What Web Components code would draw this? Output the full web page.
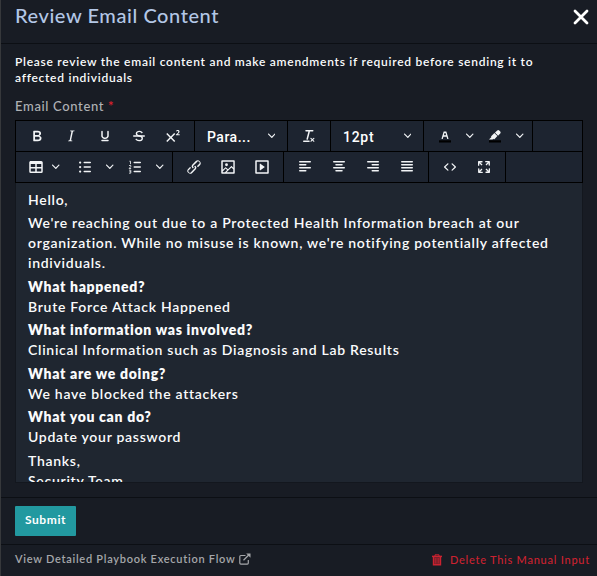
<!DOCTYPE html>
<html lang="en">
<head>
<meta charset="utf-8">
<title>Review Email Content</title>
<style>
html,body{margin:0;height:100%;background:#181c24;overflow:hidden}
body{font-family:Lato,"Liberation Sans",sans-serif;color:#fff}
</style>
</head>
<body>
<review-dialog>
  <dialog-header slot="header">Review Email Content</dialog-header>
  <form-hint>Please review the email content and make amendments if required before sending it to<br>affected individuals</form-hint>
  <field-label>Email Content</field-label>
  <rich-editor>
    <editor-toolbar slot="toolbar"></editor-toolbar>
    <mail-block style="--top:7px">Hello,</mail-block>
    <mail-block style="--top:3px">We're reaching out due to a Protected Health Information breach at our<br>organization. While no misuse is known, we're notifying potentially affected<br>individuals.</mail-block>
    <mail-block style="--top:4px"><span slot="title">What happened?</span>Brute Force Attack Happened</mail-block>
    <mail-block style="--top:3px"><span slot="title">What information was involved?</span>Clinical Information such as Diagnosis and Lab Results</mail-block>
    <mail-block style="--top:4px"><span slot="title">What are we doing?</span>We have blocked the attackers</mail-block>
    <mail-block style="--top:3px"><span slot="title">What you can do?</span>Update your password</mail-block>
    <mail-block style="--top:4px">Thanks,<br>Security Team</mail-block>
  </rich-editor>
  <submit-bar slot="actions">Submit</submit-bar>
  <dialog-footer slot="footer"><span slot="view">View Detailed Playbook Execution Flow</span><span slot="delete">Delete This Manual Input</span></dialog-footer>
</review-dialog>
<script>
const define = (name, html) => customElements.define(name, class extends HTMLElement {
  constructor() { super(); this.attachShadow({mode: 'open'}).innerHTML = html; }
});

const bars = rows => rows.map(([x, y, w]) => `<rect x="${x}" y="${y}" width="${w}" height="2" rx="1"/>`).join('');
const arrow = '<path d="m15.3 10-1.2-1.3 2.9-3h-2.3a.9.9 0 1 1 0-1.7H19c.5 0 .9.4.9.9v4.4a.9.9 0 1 1-1.8 0V7Z"/>';
const frame = 'M4 3h16c.6 0 1 .4 1 1v16c0 .6-.4 1-1 1H4a1 1 0 0 1-1-1V4c0-.6.4-1 1-1Z';
const icons = {
  bold: '<path fill-rule="evenodd" d="M7.8 19c-.3 0-.5 0-.6-.2l-.2-.5V5.7c0-.2 0-.4.2-.5l.6-.2h5c1.5 0 2.7.3 3.5 1 .7.6 1.1 1.4 1.1 2.5a3 3 0 0 1-.6 1.9c-.4.6-1 1-1.6 1.2.4.1.9.3 1.3.6s.8.7 1 1.2c.4.4.5 1 .5 1.6 0 1.3-.4 2.3-1.3 3-.8.7-2.1 1-3.8 1H7.8Zm5-8.3c.6 0 1.2-.1 1.6-.5.4-.3.6-.7.6-1.3 0-1.1-.8-1.7-2.3-1.7H9.3v3.5h3.4Zm.5 6c.7 0 1.3-.1 1.7-.4.4-.4.6-.9.6-1.5s-.2-1-.7-1.4c-.4-.3-1-.4-2-.4H9.4v3.8h4Z"/>',
  italic: '<path d="m16.7 4.7-.1.9h-.3c-.6 0-1 0-1.4.3-.3.3-.4.6-.5 1.1l-2.1 9.8v.6c0 .5.4.8 1.4.8h.2l-.2.8H8l.2-.8h.2c1.1 0 1.8-.5 2-1.5l2-9.8.1-.5c0-.6-.4-.8-1.4-.8h-.3l.2-.9h5.8Z"/>',
  underline: '<path d="M16 5c.6 0 1 .4 1 1v5.5a4 4 0 0 1-.4 1.8l-1 1.4a5.3 5.3 0 0 1-5.5 1 5 5 0 0 1-1.6-1c-.5-.4-.8-.9-1.1-1.4a4 4 0 0 1-.4-1.8V6c0-.6.4-1 1-1s1 .4 1 1v5.5c0 .3 0 .6.2 1l.6.7a3.3 3.3 0 0 0 2.2.8 3.4 3.4 0 0 0 2.2-.8c.3-.2.4-.5.6-.8l.2-.9V6c0-.6.4-1 1-1ZM8 17h8c.6 0 1 .4 1 1s-.4 1-1 1H8a1 1 0 0 1 0-2Z"/>',
  strike: '<path d="M15.6 8.5c-.5-.7-1-1.1-1.3-1.3-.6-.4-1.3-.6-2-.6-2.7 0-2.8 1.7-2.8 2.1 0 1.6 1.8 2 3.2 2.3 4.4.9 4.6 2.8 4.6 3.9 0 1.4-.7 4.1-5 4.1A6.2 6.2 0 0 1 7 16.4l1.5-1.1c.4.6 1.6 2 3.7 2 1.6 0 2.5-.4 3-1.2.4-.8.3-2-.8-2.6-.7-.4-1.6-.7-2.9-1-1-.2-3.9-.8-3.9-3.6C7.6 6 10.3 5 12.4 5c2.9 0 4.2 1.6 4.7 2.4l-1.5 1.1Z"/><path d="M5 11h14a1 1 0 0 1 0 2H5a1 1 0 0 1 0-2Z"/>',
  sup: '<path d="M15 9.4 10.4 14l4.6 4.6-1.4 1.4L9 15.4 4.4 20 3 18.6 7.6 14 3 9.4 4.4 8 9 12.6 13.6 8 15 9.4Zm5.9 1.6h-5v-1l1-.8 1.7-1.6c.3-.5.5-.9.5-1.3 0-.3 0-.5-.2-.7-.2-.2-.5-.3-.9-.3l-.8.2-.7.4-.4-1.2c.2-.2.5-.4 1-.5.3-.2.8-.2 1.2-.2.8 0 1.4.2 1.8.6.4.4.6 1 .6 1.6 0 .5-.2 1-.5 1.5l-1.3 1.4-.6.5h2.6V11Z"/>',
  clear: '<path d="M13.2 6a1 1 0 0 1 0 .2l-2.6 10a1 1 0 0 1-1 .8h-.2a.8.8 0 0 1-.8-1l2.6-10H8a1 1 0 1 1 0-2h9a1 1 0 0 1 0 2h-3.8ZM5 18h7a1 1 0 0 1 0 2H5a1 1 0 0 1 0-2Zm13 1.5L16.5 18 15 19.5a.7.7 0 0 1-1-1l1.5-1.5-1.5-1.5a.7.7 0 0 1 1-1l1.5 1.5 1.5-1.5a.7.7 0 0 1 1 1L17.5 17l1.5 1.5a.7.7 0 0 1-1 1Z"/>',
  color: '<path fill="#000" d="M4 18h16v3H4z" transform="translate(0 -.3)"/><path fill-rule="evenodd" d="M8.7 16h-.8a.5.5 0 0 1-.5-.6l2.7-9c.1-.3.3-.4.5-.4h2.8c.2 0 .4.1.5.4l2.7 9a.5.5 0 0 1-.5.6h-.8a.5.5 0 0 1-.4-.4l-.7-2.2c0-.3-.3-.4-.5-.4h-3.4c-.2 0-.4.1-.5.4l-.7 2.2c0 .3-.2.4-.4.4Zm2.6-7.6-.6 2a.5.5 0 0 0 .5.6h1.6a.5.5 0 0 0 .5-.6l-.6-2c0-.3-.3-.4-.5-.4h-.4c-.2 0-.4.1-.5.4Z"/>',
  mark: '<path fill="#000" d="M4 18h16v3H4z" transform="translate(0 -.3)"/><path d="M7.7 16.7H3l3.3-3.3-.7-.8L10.2 8l4 4.1-4 4.2c-.2.2-.6.2-.8 0l-.6-.7-1.1 1.1zm5-7.5L11 7.4l3-2.9a2 2 0 0 1 2.6 0L18 6c.7.7.7 2 0 2.7l-2.9 2.9-1.8-1.8-.5-.6Z" transform="translate(1 0)"/>',
  table: '<path fill-rule="evenodd" d="M19 4a2 2 0 0 1 2 2v12a2 2 0 0 1-2 2H5a2 2 0 0 1-2-2V6c0-1.1.9-2 2-2h14ZM5 14v4h6v-4H5Zm14 0h-6v4h6v-4Zm0-6h-6v4h6V8ZM5 12h6V8H5v4Z"/>',
  ul: bars([[10,5,10],[10,11,10],[10,17,10]]) + '<circle cx="5.5" cy="6" r="1.5"/><circle cx="5.5" cy="12" r="1.5"/><circle cx="5.5" cy="18" r="1.5"/>',
  ol: bars([[10,5,10],[10,11,10],[10,17,10]]) + '<path fill="none" stroke="currentColor" stroke-width="1.1" d="M4.5 4.3H6v4M4 10h2.3v1.5L4.2 14h2.6M4 16.2h2.4v4H4m.6-2h1.8"/>',
  link: '<path d="M6.2 12.3a1 1 0 0 1 1.4 1.4l-2 2a2 2 0 1 0 2.6 2.8l4.8-4.8a1 1 0 0 0 0-1.4 1 1 0 1 1 1.4-1.3 2.9 2.9 0 0 1 0 4L9.6 20a3.9 3.9 0 0 1-5.5-5.5l2-2Zm11.6-.6a1 1 0 0 1-1.4-1.4l2-2a2 2 0 1 0-2.6-2.8L11 10.3a1 1 0 0 0 0 1.4A1 1 0 1 1 9.6 13a2.9 2.9 0 0 1 0-4L14.4 4a3.9 3.9 0 0 1 5.5 5.5l-2 2Z"/>',
  image: '<path fill-rule="evenodd" d="m5 15.7 3.3-3.2c.3-.3.7-.3 1 0L12 15l4.1-4c.3-.4.8-.4 1 0l2 1.9V5H5v10.7ZM5 18V19h3l2.8-2.9-2-2L5 17.9Zm14-3-2.5-2.4-6.4 6.5H19v-4Z' + frame + '"/><circle cx="10" cy="9" r="1.9"/>',
  media: '<path fill-rule="evenodd" d="' + frame + 'm1 2v14h14V5H5Z"/><path d="m9.8 7.6 5.6 4a.5.5 0 0 1 0 .8l-5.6 4A.5.5 0 0 1 9 16V8a.5.5 0 0 1 .8-.4Z"/>',
  left: bars([[4,4,16],[4,8,10],[4,12,16],[4,16,10]]),
  center: bars([[4,4,16],[7,8,10],[4,12,16],[7,16,10]]),
  right: bars([[4,4,16],[10,8,10],[4,12,16],[10,16,10]]),
  justify: bars([[4,4,16],[4,8,16],[4,12,16],[4,16,16]]),
  code: '<path d="M9.8 15.7c.3.3.3.8 0 1-.3.4-.9.4-1.2 0l-4.4-4.1a.8.8 0 0 1 0-1.2l4.4-4.2c.3-.3.9-.3 1.2 0 .3.3.3.8 0 1.1L6 12l3.8 3.7ZM14.2 15.7c-.3.3-.3.8 0 1 .4.4.9.4 1.2 0l4.4-4.1c.3-.3.3-.9 0-1.2l-4.4-4.2a.8.8 0 0 0-1.2 0c-.3.3-.3.8 0 1.1L18 12l-3.8 3.7Z"/>',
  full: [0, 90, 180, 270].map(a => `<g transform="rotate(${a} 12 12)">${arrow}</g>`).join('')
};
const chevron = '<svg width="7.5" height="7.5" viewBox="0 0 10 10"><path d="M8.7 2.2c.3-.3.8-.3 1 0 .4.4.4.9 0 1.2L5.7 7.8c-.3.3-.9.3-1.2 0L.2 3.4a.8.8 0 0 1 0-1.2c.3-.3.8-.3 1.1 0L5 6l3.7-3.8Z"/></svg>';

customElements.define('tool-button', class extends HTMLElement {
  constructor() {
    super();
    const kind = this.getAttribute('kind') || 'plain';
    this.attachShadow({mode: 'open'}).innerHTML = `<style>
      :host{display:flex;align-items:center;height:30px;color:#f2f4f6}
      svg{display:block;fill:currentColor}
      .main{width:34px;display:grid;place-items:center}
      .drop{width:16px;display:grid;place-items:center}
      .menu .main{width:32px}
      .menu .drop{width:8px;margin-right:8px}
      .box{display:flex;align-items:center}
    </style><div class="box ${kind}"><span class="main"><svg width="18" height="18" viewBox="0 0 24 24">${icons[this.getAttribute('icon')]}</svg></span>${kind === 'plain' ? '' : `<span class="drop">${chevron}</span>`}</div>`;
  }
});
define('tool-select', `<style>
  :host{display:flex;align-items:center;justify-content:space-between;box-sizing:border-box;width:84px;height:30px;padding:0 8px;font:500 14px/20px Roboto,sans-serif;letter-spacing:.5px;color:#fff}
  span{padding-top:2px}
  svg{display:block;fill:#f2f4f6}
</style><span><slot></slot></span>${chevron}`);
define('tool-group', `<style>
  :host{display:flex;box-sizing:border-box;height:30px;padding:0 4px;border-right:1px solid #000}
  :host([fill]){flex:1;border:0}
</style><slot></slot>`);

const button = name => `<tool-button icon="${name}"></tool-button>`;
const split = name => `<tool-button icon="${name}" kind="split"></tool-button>`;
const group = html => `<tool-group>${html}</tool-group>`;
define('editor-toolbar', `<style>
  :host{display:block;background:#1d2430;border:1px solid #000}
  .row{display:flex;height:30px}
  .row+.row{border-top:1px solid #000}
</style>
<div class="row">
${group(['bold','italic','underline','strike','sup'].map(button).join(''))}
${group('<tool-select>Para...</tool-select>')}
${group(button('clear'))}
${group('<tool-select style="letter-spacing:.7px">12pt</tool-select>')}
${group(split('color') + split('mark'))}
<tool-group fill></tool-group>
</div>
<div class="row">
${group('<tool-button icon="table" kind="menu"></tool-button>' + split('ul') + split('ol'))}
${group(['link','image','media'].map(button).join(''))}
${group(['left','center','right','justify'].map(button).join(''))}
${group(['code','full'].map(button).join(''))}
<tool-group fill></tool-group>
</div>`);

define('mail-block', `<style>
  :host{display:block;margin-top:var(--top);white-space:nowrap}
  ::slotted([slot=title]){display:block;font-weight:800;height:20px;letter-spacing:.7px}
</style><slot name="title"></slot><slot></slot>`);
define('rich-editor', `<style>
  :host{display:flex;flex-direction:column;height:363px;width:568px;margin:5px 0 0 15px;box-sizing:border-box}
  .page{flex:1;min-height:0;overflow:hidden;box-sizing:border-box;background:#1f2630;border:1px solid #13171e;border-top:0;padding-left:12px;font:600 14px/20px Lato,sans-serif;letter-spacing:.72px;color:#fafbfc;display:flow-root}
</style><slot name="toolbar"></slot><div class="page"><slot></slot></div>`);
define('form-hint', `<style>
  :host{display:block;padding:10px 0 0 15px;font:600 12px/16px Lato,sans-serif;letter-spacing:.73px;white-space:nowrap;color:#fafbfc}
</style><slot></slot>`);
define('field-label', `<style>
  :host{display:block;padding:11px 0 0 15px;font:500 13px/18px Lato,sans-serif;letter-spacing:.65px;color:#b0b2b5}
  b{font-weight:600;color:#e0202d}
</style><slot></slot> <b>*</b>`);
define('dialog-header', `<style>
  :host{display:flex;justify-content:space-between;box-sizing:border-box;height:44px;padding:2px 8px 0 15px;border-bottom:1px solid #0c0f14;font:500 20px/27px Lato,sans-serif;letter-spacing:.57px;color:#b3c7e6}
  svg{display:block;margin-top:7px}
</style><span><slot></slot></span>
<svg width="16" height="16" viewBox="0 0 16 16"><path d="M2 2l12 12M14 2L2 14" fill="none" stroke="#fff" stroke-width="2.8" stroke-linecap="round"/></svg>`);
define('submit-bar', `<style>
  :host{display:block;box-sizing:border-box;height:48px;padding:8px 0 0 15px;border-top:1px solid #0c0f14;border-bottom:1px solid #0c0f14}
  button{display:block;width:61px;height:30px;padding:0 0 2px;border:0;border-radius:1px;background:#2299a0;color:#fff;font:700 12px/16px Lato,sans-serif;letter-spacing:.6px}
</style><button><slot></slot></button>`);
define('dialog-footer', `<style>
  :host{display:flex;justify-content:space-between;padding:5px 7px 0 15px;font:600 11px/18px Lato,sans-serif;letter-spacing:.73px;color:#a5a7aa}
  div{display:flex;align-items:center;height:18px}
  svg{display:block}
  .del{color:#cb2230;font-weight:500;letter-spacing:.76px;margin-top:1px}
</style>
<div><slot name="view"></slot><svg width="12" height="12" viewBox="0 0 12 12" style="margin:-1px 0 0 3px" fill="none" stroke="currentColor"><path d="M6.5 2.5H1.8a1 1 0 0 0-1 1v6.6a1 1 0 0 0 1 1h6.5a1 1 0 0 0 1-1V7M4.5 7.2 10 1.8" stroke-width="1.2"/><path d="M7.2.5h4.3v4.3z" fill="currentColor" stroke="none"/></svg></div>
<div class="del"><svg width="10" height="12" viewBox="0 0 10 12" style="margin:-1px 8px 0 0" fill="none" stroke="currentColor"><path d="M0 2.4h10" stroke-width="1.5"/><path d="M3 2V.8h4V2" stroke-width="1"/><path d="M1.5 3v7.8h7V3" stroke-width="1.4" fill="#76202b"/><path d="M3.8 4v5.5M6.2 4v5.5" stroke-width=".8"/></svg><slot name="delete"></slot></div>`);
define('review-dialog', `<style>
  :host{display:flex;flex-direction:column;box-sizing:border-box;width:597px;height:576px;background:#181c24}
  main{height:453px;box-sizing:border-box}
  .edge{position:absolute;left:0;top:0;width:1px;height:576px;background:#36383b}
</style><slot name="header"></slot><main><slot></slot></main><slot name="actions"></slot><slot name="footer"></slot><i class="edge"></i>`);
</script>
</body>
</html>
